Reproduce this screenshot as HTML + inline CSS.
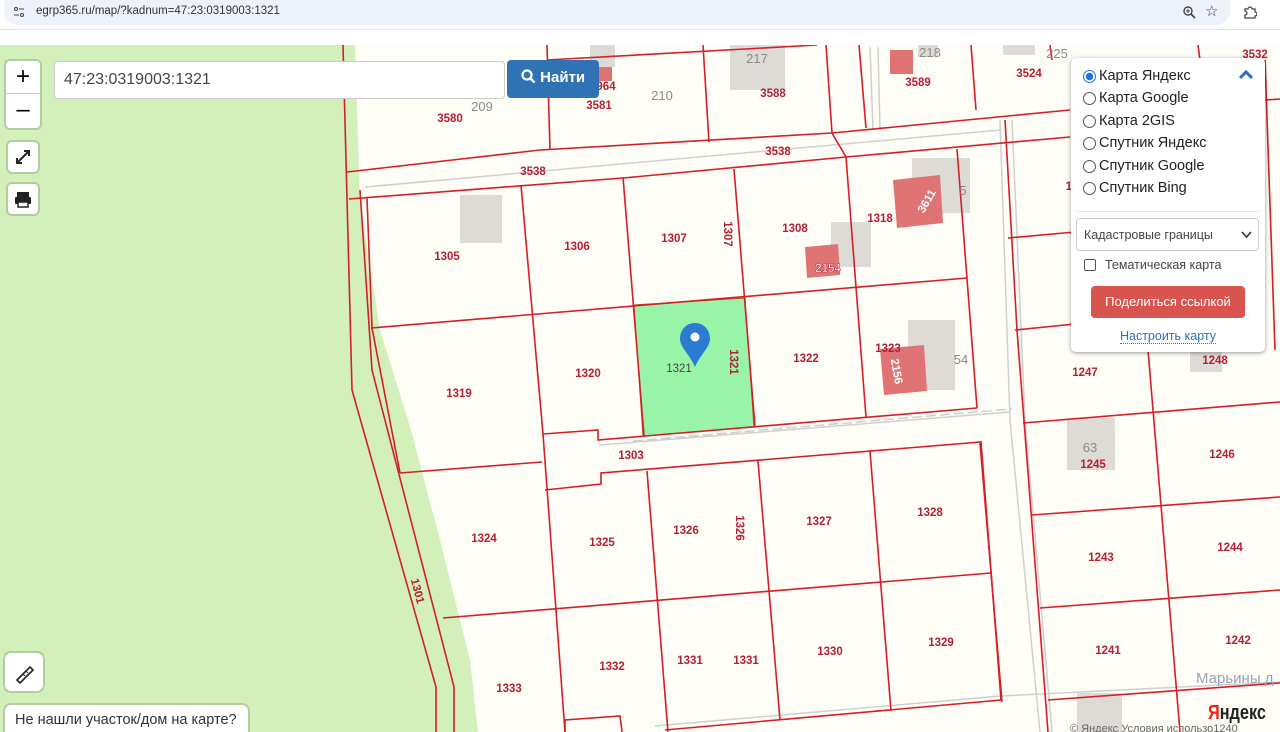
<!DOCTYPE html>
<html><head><meta charset="utf-8">
<style>
*{margin:0;padding:0;box-sizing:border-box}
body{width:1280px;height:732px;overflow:hidden;background:#fff;font-family:"Liberation Sans",sans-serif;position:relative}
.bar{position:absolute;left:0;top:0;width:1280px;height:30px;background:#fff;border-bottom:1px solid #e3e3e3}
.pill{position:absolute;left:4px;top:0;width:1226px;height:25px;background:#edf1fa;border-radius:0 0 14px 14px}
.url{position:absolute;left:36px;top:5px;font-size:11.5px;color:#333}
.map{position:absolute;left:0;top:45px;width:1280px;height:687px;background:#fefdf6;overflow:hidden}
.ctl{position:absolute;background:#fff;border-radius:4px;box-shadow:0 0 0 2px rgba(0,0,0,.15)}
.panel{position:absolute;left:1071px;top:13px;width:194px;height:294px;background:#fff;border-radius:5px;box-shadow:0 1px 4px rgba(0,0,0,.4);font-size:14.5px;color:#222}
.r{position:absolute;left:12px;height:20px;display:flex;align-items:center}
.r i{display:inline-block;width:13px;height:13px;border:1px solid #555;border-radius:50%;margin-right:3px}
</style></head><body>
<div class="bar"><div class="pill"></div>
<svg style="position:absolute;left:13px;top:6px" width="12" height="12"><circle cx="3" cy="3" r="1.5" fill="none" stroke="#444"/><line x1="6" y1="3" x2="11" y2="3" stroke="#444"/><circle cx="9" cy="9" r="1.5" fill="none" stroke="#444"/><line x1="1" y1="9" x2="6" y2="9" stroke="#444"/></svg>
<div class="url">egrp365.ru/map/?kadnum=47:23:0319003:1321</div>
<svg style="position:absolute;left:1182px;top:5px" width="14" height="14"><circle cx="6" cy="6" r="4" fill="none" stroke="#444" stroke-width="1.4"/><line x1="9" y1="9" x2="13" y2="13" stroke="#444" stroke-width="1.6"/><line x1="4" y1="6" x2="8" y2="6" stroke="#444"/><line x1="6" y1="4" x2="6" y2="8" stroke="#444"/></svg>
<div style="position:absolute;left:1205px;top:2px;font-size:15px;color:#444">☆</div>
<svg style="position:absolute;left:1243px;top:5px" width="14" height="14"><path d="M2 4h3a2 2 0 0 1 4 0h3v3a2 2 0 0 1 0 4v2H2v-3a2 2 0 0 0 0-4z" fill="none" stroke="#444" stroke-width="1.3"/></svg>
</div>
<div class="map">
<svg width="1280" height="687" viewBox="0 45 1280 687" style="position:absolute;left:0;top:0" font-family="Liberation Sans" font-size="12">
<polygon points="0,45 355,45 360,200 380,330 411,430 440,540 470,660 478,732 0,732" fill="#d3f0bb"/>
<g fill="#dedbd6">
<rect x="460" y="195" width="42" height="48"/><rect x="730" y="45" width="55" height="45"/><rect x="590" y="45" width="25" height="22"/><rect x="1003" y="45" width="32" height="10"/><rect x="912" y="158" width="58" height="55"/><rect x="831" y="222" width="40" height="45"/><rect x="908" y="320" width="47" height="70"/><rect x="1067" y="418" width="48" height="52"/><rect x="1190" y="350" width="32" height="22"/><rect x="918" y="45" width="20" height="12"/><rect x="1077" y="693" width="45" height="39"/></g>
<g fill="#e07474">
<rect x="890" y="50" width="23" height="24"/><polygon points="893,180 940,175 943,223 897,228"/><polygon points="805,247 838,244 840,275 807,278"/><polygon points="880,349 924,345 927,391 884,395"/><rect x="598" y="67" width="14" height="14"/></g>
<polygon points="634,305 745,298 754,427 643,436" fill="#98f5a8" stroke="#b42" stroke-width="1"/>
<g stroke="#cfcfcf" fill="none" stroke-width="1.5">
<path d="M365,187 L1000,130"/><path d="M600,445 L1010,412"/><path d="M633,441 L1012,409" stroke-dasharray="10,4"/>
<path d="M1000,120 L1010,420 L1040,732"/><path d="M1012,120 L1025,420 L1052,732"/><path d="M870,47 L873,130"/><path d="M878,47 L880,130"/>
<path d="M655,726 L1001,696 L1280,682"/></g>
<g stroke="#d41e2a" fill="none" stroke-width="1.6">
<path d="M343,45 L352,390 L436,687 L436,732"/>
<path d="M360,190 L372,370 L454,687 L454,732"/>
<path d="M367,198 L372,328 L400,473"/>
<path d="M347,172 L540,150 L832,133 L1070,110"/>
<path d="M349,199 L623,178 L846,157 L1070,137"/>
<path d="M547,60 L817,45"/>
<path d="M547,45 L550,150"/><path d="M703,45 L709,142"/><path d="M826,45 L832,133 L846,157 L866,417"/><path d="M859,45 L866,128"/><path d="M971,45 L976,110"/><path d="M1050,45 L1052,60"/><path d="M1198,45 L1200,60"/>
<path d="M521,185 L543,434 L565,732"/><path d="M623,177 L644,436"/><path d="M734,169 L755,427"/><path d="M957,149 L977,408"/>
<path d="M371,328 L967,278"/>
<path d="M543,434 L598,430 L598,440 L977,408"/>
<path d="M400,473 L542,462"/>
<path d="M545,490 L601,484 L601,473 L981,442 L1001,700"/>
<path d="M647,471 L668,732"/><path d="M758,461 L780,720"/><path d="M870,451 L891,711"/>
<path d="M443,618 L991,573"/><path d="M665,730 L1001,700"/><path d="M565,732 L565,720 L620,716 L622,732"/>
<path d="M1005,120 L1017,330 L1048,732"/><path d="M1148,350 L1180,732"/><path d="M980,443 L1002,702"/>
<path d="M1023,423 L1280,402"/><path d="M1032,515 L1280,497"/><path d="M1040,608 L1280,590"/><path d="M1048,700 L1280,683"/>
<path d="M1008,238 L1075,232"/><path d="M1015,330 L1075,324"/><path d="M1265,60 L1275,350"/><path d="M1265,100 L1280,99"/>
</g>
<g fill="#b51f35" text-anchor="middle" font-weight="bold" font-size="11.5">
<text x="450" y="122">3580</text><text x="599" y="109">3581</text><text x="773" y="97">3588</text><text x="918" y="86">3589</text><text x="1029" y="77">3524</text><text x="1255" y="58">3532</text><text x="606" y="90">964</text>
<text x="778" y="155">3538</text><text x="533" y="175">3538</text>
<text x="447" y="260">1305</text><text x="577" y="250">1306</text><text x="674" y="242">1307</text><text x="795" y="232">1308</text><text x="880" y="222">1318</text>
<text x="459" y="397">1319</text><text x="588" y="377">1320</text><text x="806" y="362">1322</text><text x="888" y="352">1323</text>
<text x="631" y="459">1303</text><text x="484" y="542">1324</text><text x="602" y="546">1325</text><text x="686" y="534">1326</text><text x="819" y="525">1327</text><text x="930" y="516">1328</text>
<text x="612" y="670">1332</text><text x="690" y="664">1331</text><text x="746" y="664">1331</text><text x="830" y="655">1330</text><text x="941" y="646">1329</text><text x="509" y="692">1333</text>
<text x="1085" y="376">1247</text><text x="1215" y="364">1248</text><text x="1093" y="468">1245</text><text x="1222" y="458">1246</text><text x="1101" y="561">1243</text><text x="1230" y="551">1244</text><text x="1108" y="654">1241</text><text x="1238" y="644">1242</text><text x="1072" y="190">12</text>
<text transform="translate(724,234) rotate(90)">1307</text><text transform="translate(730,362) rotate(90)">1321</text><text transform="translate(736,528) rotate(90)">1326</text>
<text transform="translate(414,592) rotate(75)" fill="#b51f35">1301</text>
<text x="828" y="272" fill="#fff" stroke="#b51f35" stroke-width=".5">2154</text>
<text transform="translate(930,203) rotate(-60)" fill="#fff">3611</text>
<text transform="translate(893,372) rotate(80)" fill="#fff">2156</text>
</g>
<text x="679" y="372" font-size="11.5" fill="#444" text-anchor="middle">1321</text>
<g fill="#8a8a8a" font-size="13" text-anchor="middle"><text x="482" y="111">209</text><text x="662" y="100">210</text><text x="757" y="63">217</text><text x="930" y="57">218</text><text x="1057" y="58">225</text><text x="1090" y="452">63</text><text x="961" y="364">54</text><text x="963" y="195">5</text></g>
<text x="1196" y="683" font-size="15" fill="#98a4b8">Марьины д</text>
<text x="1208" y="719" font-size="20" fill="#222" font-weight="bold" textLength="58" lengthAdjust="spacingAndGlyphs"><tspan fill="#e21">Я</tspan>ндекс</text>
<text x="1070" y="732" font-size="11" fill="#666">© Яндекс  Условия использо1240</text>
<g transform="translate(695,323)"><path d="M0,0 C-9,0 -15,7 -15,16 C-15,24 -5,32 0,44 C5,32 15,24 15,16 C15,7 9,0 0,0 Z" fill="#2b7bd0"/><circle cx="0" cy="14" r="4.5" fill="#fff"/></g>
</svg>
<div class="ctl" style="left:6px;top:16px;width:34px;height:67px">
<div style="position:absolute;left:0;top:0;width:34px;height:33px;border-bottom:1px solid #ccc;font-size:24px;text-align:center;line-height:32px">+</div>
<div style="position:absolute;left:0;top:34px;width:34px;height:33px;font-size:24px;text-align:center;line-height:30px">–</div></div>
<div class="ctl" style="left:8px;top:97px;width:30px;height:30px"><svg width="30" height="30"><path d="M9 21L21 9M16 9h5v5M9 16v5h5" stroke="#222" stroke-width="2" fill="none"/></svg></div>
<div class="ctl" style="left:8px;top:139px;width:30px;height:30px"><svg width="30" height="30"><rect x="9" y="8" width="12" height="5" fill="#222"/><rect x="7" y="13" width="16" height="7" rx="1" fill="#222"/><rect x="10" y="18" width="10" height="5" fill="#fff" stroke="#222" stroke-width="1.5"/></svg></div>
<div class="ctl" style="left:5px;top:608px;width:38px;height:38px;border-radius:6px"><svg width="38" height="38"><path d="M12 27L25 14l3 3L15 30z" fill="#fff" stroke="#222" stroke-width="1.6"/><path d="M18 21l2 2M21 18l2 2" stroke="#222"/></svg></div>
<div class="ctl" style="left:5px;top:660px;width:243px;height:34px;border-radius:6px;font-size:14.5px;color:#333;padding:7px 0 0 10px">Не нашли участок/дом на карте?</div>
<div style="position:absolute;left:54px;top:16px;width:451px;height:38px;background:#fff;border:1px solid #ccc;border-radius:4px;font-size:16px;color:#444;padding:9px 0 0 9px">47:23:0319003:1321</div>
<div style="position:absolute;left:507px;top:15px;width:92px;height:38px;background:#2f73b5;border-radius:4px;color:#fff;font-size:15px;font-weight:bold;padding:9px 0 0 14px"><svg width="15" height="15" style="vertical-align:-2px"><circle cx="6" cy="6" r="4.5" fill="none" stroke="#fff" stroke-width="2.2"/><line x1="9.5" y1="9.5" x2="13.5" y2="13.5" stroke="#fff" stroke-width="2.6"/></svg> Найти</div>
<div class="panel">
<div class="r" style="top:8px"><i style="border-color:#1a73e8;background:radial-gradient(#1a73e8 45%,#fff 50%)"></i>Карта Яндекс</div>
<svg style="position:absolute;left:168px;top:12px" width="14" height="10"><path d="M1 8L7 2l6 6" stroke="#2f6fb5" stroke-width="3" fill="none"/></svg>
<div class="r" style="top:30px"><i></i>Карта Google</div>
<div class="r" style="top:53px"><i></i>Карта 2GIS</div>
<div class="r" style="top:75px"><i></i>Спутник Яндекс</div>
<div class="r" style="top:98px"><i></i>Спутник Google</div>
<div class="r" style="top:120px"><i></i>Спутник Bing</div>
<div style="position:absolute;left:5px;top:153px;width:184px;border-top:1px solid #e5e5e5"></div>
<div style="position:absolute;left:5px;top:160px;width:183px;height:33px;border:1px solid #ccc;border-radius:4px;font-size:12.5px;color:#444;padding:9px 0 0 7px">Кадастровые границы<svg style="position:absolute;right:6px;top:12px" width="11" height="8"><path d="M1 1l4.5 5L10 1" stroke="#333" stroke-width="1.6" fill="none"/></svg></div>
<div style="position:absolute;left:13px;top:201px;width:12px;height:12px;border:1px solid #555;border-radius:2px"></div>
<div style="position:absolute;left:34px;top:200px;font-size:12.5px;color:#444">Тематическая карта</div>
<div style="position:absolute;left:20px;top:228px;width:154px;height:32px;background:#d9534f;border-radius:4px;color:#fff;font-size:13px;text-align:center;line-height:32px">Поделиться ссылкой</div>
<div style="position:absolute;left:0;width:194px;top:271px;text-align:center;font-size:12.5px;color:#2f6fb5"><span style="border-bottom:1px dotted #2f6fb5">Настроить карту</span></div>
</div>
</div>
</body></html>
